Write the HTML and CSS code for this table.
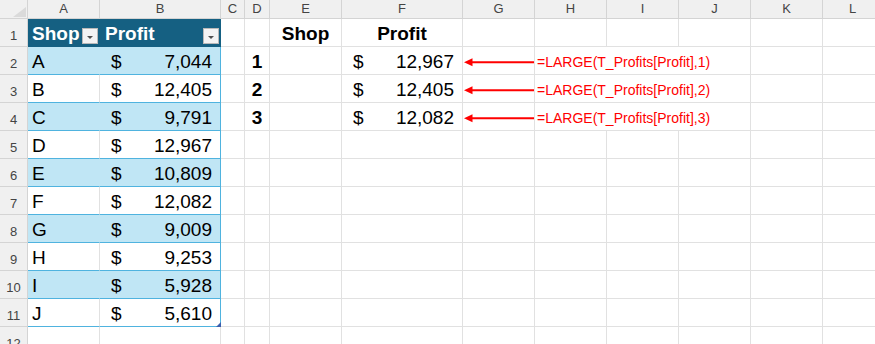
FILE: index.html
```html
<!DOCTYPE html>
<html>
<head>
<meta charset="utf-8">
<link rel="stylesheet" href="styles.css">
</head>
<body>
<div class="sheet">
  <!-- column headers -->
  <div class="c corner"><span class="tri"></span></div>
  <div class="c ch">A</div><div class="c ch">B</div><div class="c ch">C</div><div class="c ch">D</div><div class="c ch">E</div><div class="c ch">F</div><div class="c ch">G</div><div class="c ch">H</div><div class="c ch">I</div><div class="c ch">J</div><div class="c ch">K</div><div class="c ch">L</div>

  <!-- row 1 -->
  <div class="c rh">1</div>
  <div class="c th tha">Shop<span class="dd"></span></div>
  <div class="c th thb">Profit<span class="dd"></span></div>
  <div class="c"></div><div class="c"></div>
  <div class="c bold center">Shop</div>
  <div class="c bold center">Profit</div>
  <div class="c"></div><div class="c"></div><div class="c"></div><div class="c"></div><div class="c"></div><div class="c"></div>

  <!-- row 2 -->
  <div class="c rh">2</div>
  <div class="c ta band">A</div>
  <div class="c tb band acct"><span>$</span><span>7,044</span></div>
  <div class="c"></div>
  <div class="c bold center">1</div>
  <div class="c"></div>
  <div class="c acct"><span>$</span><span>12,967</span></div>
  <div class="c arrow-cell"><svg class="arrow" width="72" height="28" viewBox="0 0 72 28"><line x1="8" y1="15.3" x2="71" y2="15.3" stroke="#ff0000" stroke-width="2"/><polygon points="1,15.3 9.5,11.3 9.5,19.3" fill="#ff0000"/></svg></div>
  <div class="c formula">=LARGE(T_Profits[Profit],1)</div>
  <div class="c"></div><div class="c"></div>

  <!-- row 3 -->
  <div class="c rh">3</div>
  <div class="c ta">B</div>
  <div class="c tb acct"><span>$</span><span>12,405</span></div>
  <div class="c"></div>
  <div class="c bold center">2</div>
  <div class="c"></div>
  <div class="c acct"><span>$</span><span>12,405</span></div>
  <div class="c arrow-cell"><svg class="arrow" width="72" height="28" viewBox="0 0 72 28"><line x1="8" y1="15.3" x2="71" y2="15.3" stroke="#ff0000" stroke-width="2"/><polygon points="1,15.3 9.5,11.3 9.5,19.3" fill="#ff0000"/></svg></div>
  <div class="c formula">=LARGE(T_Profits[Profit],2)</div>
  <div class="c"></div><div class="c"></div>

  <!-- row 4 -->
  <div class="c rh">4</div>
  <div class="c ta band">C</div>
  <div class="c tb band acct"><span>$</span><span>9,791</span></div>
  <div class="c"></div>
  <div class="c bold center">3</div>
  <div class="c"></div>
  <div class="c acct"><span>$</span><span>12,082</span></div>
  <div class="c arrow-cell"><svg class="arrow" width="72" height="28" viewBox="0 0 72 28"><line x1="8" y1="15.3" x2="71" y2="15.3" stroke="#ff0000" stroke-width="2"/><polygon points="1,15.3 9.5,11.3 9.5,19.3" fill="#ff0000"/></svg></div>
  <div class="c formula">=LARGE(T_Profits[Profit],3)</div>
  <div class="c"></div><div class="c"></div>

  <!-- row 5 -->
  <div class="c rh">5</div>
  <div class="c ta">D</div>
  <div class="c tb acct"><span>$</span><span>12,967</span></div>
  <div class="c"></div><div class="c"></div><div class="c"></div><div class="c"></div><div class="c"></div><div class="c"></div><div class="c"></div><div class="c"></div><div class="c"></div><div class="c"></div>

  <!-- row 6 -->
  <div class="c rh">6</div>
  <div class="c ta band">E</div>
  <div class="c tb band acct"><span>$</span><span>10,809</span></div>
  <div class="c"></div><div class="c"></div><div class="c"></div><div class="c"></div><div class="c"></div><div class="c"></div><div class="c"></div><div class="c"></div><div class="c"></div><div class="c"></div>

  <!-- row 7 -->
  <div class="c rh">7</div>
  <div class="c ta">F</div>
  <div class="c tb acct"><span>$</span><span>12,082</span></div>
  <div class="c"></div><div class="c"></div><div class="c"></div><div class="c"></div><div class="c"></div><div class="c"></div><div class="c"></div><div class="c"></div><div class="c"></div><div class="c"></div>

  <!-- row 8 -->
  <div class="c rh">8</div>
  <div class="c ta band">G</div>
  <div class="c tb band acct"><span>$</span><span>9,009</span></div>
  <div class="c"></div><div class="c"></div><div class="c"></div><div class="c"></div><div class="c"></div><div class="c"></div><div class="c"></div><div class="c"></div><div class="c"></div><div class="c"></div>

  <!-- row 9 -->
  <div class="c rh">9</div>
  <div class="c ta">H</div>
  <div class="c tb acct"><span>$</span><span>9,253</span></div>
  <div class="c"></div><div class="c"></div><div class="c"></div><div class="c"></div><div class="c"></div><div class="c"></div><div class="c"></div><div class="c"></div><div class="c"></div><div class="c"></div>

  <!-- row 10 -->
  <div class="c rh">10</div>
  <div class="c ta band">I</div>
  <div class="c tb band acct"><span>$</span><span>5,928</span></div>
  <div class="c"></div><div class="c"></div><div class="c"></div><div class="c"></div><div class="c"></div><div class="c"></div><div class="c"></div><div class="c"></div><div class="c"></div><div class="c"></div>

  <!-- row 11 -->
  <div class="c rh">11</div>
  <div class="c ta">J</div>
  <div class="c tb acct"><span>$</span><span>5,610</span><svg class="handle" width="5" height="5" viewBox="0 0 5 5"><polygon points="5,0 5,5 0,5" fill="#3b5fae"/></svg></div>
  <div class="c"></div><div class="c"></div><div class="c"></div><div class="c"></div><div class="c"></div><div class="c"></div><div class="c"></div><div class="c"></div><div class="c"></div><div class="c"></div>

  <!-- row 12 -->
  <div class="c rh">12</div>
  <div class="c"></div><div class="c"></div><div class="c"></div><div class="c"></div><div class="c"></div><div class="c"></div><div class="c"></div><div class="c"></div><div class="c"></div><div class="c"></div><div class="c"></div><div class="c"></div>
</div>
</body>
</html>
```

FILE: styles.css
```css
* { box-sizing: border-box; }
html, body {
  margin: 0;
  padding: 0;
  background: #ffffff;
  overflow: hidden;
}
body {
  font-family: "Liberation Sans", Arial, sans-serif;
  color: #000;
}
.sheet {
  display: grid;
  grid-template-columns: 28px 72px 121px 24px 25px 72px 121px 72px 72px 72px 72px 72px 60px;
  grid-template-rows: 19px;
  grid-auto-rows: 28px;
  width: 883px;
}
.c {
  position: relative;
  border-right: 1px solid #e1e1e1;
  border-bottom: 1px solid #e1e1e1;
  font-size: 19px;
  line-height: 27px;
  padding: 1px 4px 0 4px;
  white-space: nowrap;
}
.corner {
  background: #f0f0f0;
  border-color: #d4d4d4;
}
.corner .tri {
  position: absolute;
  right: 1px;
  bottom: 1px;
  width: 0;
  height: 0;
  border-left: 13px solid transparent;
  border-bottom: 10px solid #dadada;
}
.ch {
  background: #f0f0f0;
  border-color: #d4d4d4;
  font-size: 13px;
  line-height: 18px;
  padding: 0;
  text-align: center;
  color: #444;
}
.rh {
  background: #f0f0f0;
  border-color: #d4d4d4;
  font-size: 13px;
  line-height: 20px;
  padding: 7px 0 0 0;
  text-align: center;
  color: #444;
}
.th {
  background: #156082;
  color: #fff;
  font-weight: bold;
  border-bottom-color: #156082;
}
.tha { border-right-color: #156082; }
.thb { border-right-color: #156082; padding-left: 5px; }
.dd {
  position: absolute;
  right: 1px;
  bottom: 2px;
  width: 16px;
  height: 16px;
  background: #f4f4f4;
  border: 1px solid #b9b9b9;
}
.dd::after {
  content: "";
  position: absolute;
  left: 4px;
  top: 7px;
  width: 0;
  height: 0;
  border-left: 3px solid transparent;
  border-right: 3px solid transparent;
  border-top: 3px solid #505050;
}
.ta {
  border-bottom-color: #4fb3df;
}
.tb {
  border-bottom-color: #4fb3df;
  border-right-color: #4fb3df;
}
.band {
  background: #c0e6f5;
}
.ta.band {
  border-right-color: #c0e6f5;
}
.acct {
  display: flex;
  justify-content: space-between;
  padding: 1px 8px 0 11px;
}
.bold { font-weight: bold; }
.center { text-align: center; padding-left: 0; padding-right: 0; }
.arrow-cell { padding: 0; }
.arrow {
  position: absolute;
  left: 0;
  top: 0;
  display: block;
}
.formula {
  grid-column: span 3;
  color: #ff0000;
  font-size: 14px;
  padding: 2px 0 0 2px;
}
.handle {
  position: absolute;
  right: -1px;
  bottom: -1px;
  display: block;
}
```
